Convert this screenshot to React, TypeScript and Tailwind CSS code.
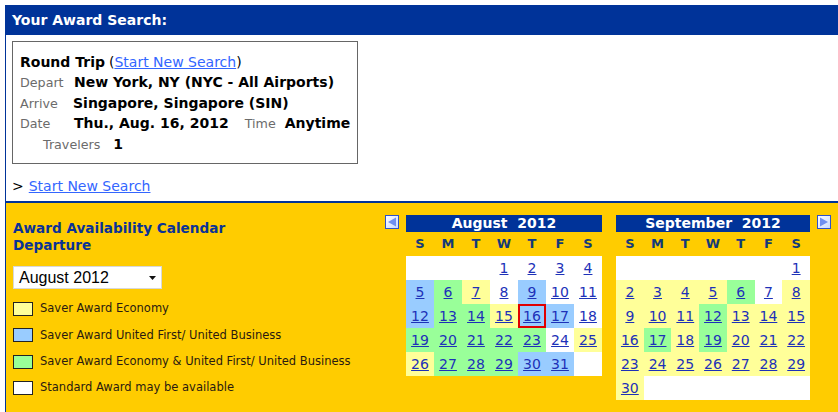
import React from "react";

const COLORS: Record<string, string> = {
  y: "bg-[#FFFF99]",
  b: "bg-[#99CCFF]",
  g: "bg-[#99FF99]",
  w: "bg-white",
};

type Cell = { d: number | null; c: string; sel?: boolean };

const aug: Cell[][] = [
  [
    { d: null, c: "w" },
    { d: null, c: "w" },
    { d: null, c: "w" },
    { d: 1, c: "w" },
    { d: 2, c: "w" },
    { d: 3, c: "w" },
    { d: 4, c: "w" },
  ],
  [
    { d: 5, c: "b" },
    { d: 6, c: "g" },
    { d: 7, c: "y" },
    { d: 8, c: "w" },
    { d: 9, c: "b" },
    { d: 10, c: "w" },
    { d: 11, c: "w" },
  ],
  [
    { d: 12, c: "b" },
    { d: 13, c: "g" },
    { d: 14, c: "g" },
    { d: 15, c: "y" },
    { d: 16, c: "b", sel: true },
    { d: 17, c: "b" },
    { d: 18, c: "w" },
  ],
  [
    { d: 19, c: "g" },
    { d: 20, c: "g" },
    { d: 21, c: "g" },
    { d: 22, c: "g" },
    { d: 23, c: "g" },
    { d: 24, c: "w" },
    { d: 25, c: "y" },
  ],
  [
    { d: 26, c: "y" },
    { d: 27, c: "g" },
    { d: 28, c: "g" },
    { d: 29, c: "g" },
    { d: 30, c: "b" },
    { d: 31, c: "b" },
    { d: null, c: "w" },
  ],
];

const sepColors: Record<number, string> = { 1: "w", 6: "g", 7: "w", 12: "g", 17: "g", 19: "g" };
const sep: Cell[][] = (() => {
  const cells: Cell[] = [];
  for (let i = 0; i < 6; i++) cells.push({ d: null, c: "w" });
  for (let d = 1; d <= 30; d++) cells.push({ d, c: sepColors[d] ?? "y" });
  while (cells.length < 42) cells.push({ d: null, c: "w" });
  const rows: Cell[][] = [];
  for (let r = 0; r < 6; r++) rows.push(cells.slice(r * 7, r * 7 + 7));
  return rows;
})();

function Arrow({ dir }: { dir: "left" | "right" }) {
  const id = "g" + dir;
  return (
    <svg width="14" height="14" viewBox="0 0 14 14" className="block">
      <defs>
        <linearGradient id={id} x1="0" y1="0" x2="1" y2="1">
          <stop offset="0" stopColor="#ffffff" />
          <stop offset="1" stopColor="#c8d8ff" />
        </linearGradient>
      </defs>
      <rect x="0.5" y="0.5" width="13" height="13" fill={`url(#${id})`} stroke="#2f52c8" />
      {dir === "left" ? (
        <polygon points="11,2.5 11,11.5 3,7" fill="#6f8ff0" />
      ) : (
        <polygon points="3,2.5 3,11.5 11,7" fill="#6f8ff0" />
      )}
    </svg>
  );
}

function Calendar({ title, rows, width }: { title: string; rows: Cell[][]; width: string }) {
  return (
    <div className={width}>
      <div className="h-[17px] bg-[#003399] text-white font-bold text-[14px] leading-[17px] text-center whitespace-pre">
        {title}
      </div>
      <div className="grid grid-cols-7 h-[24px] items-center text-center text-[13px] font-bold text-[#123a7a]">
        {["S", "M", "T", "W", "T", "F", "S"].map((l, i) => (
          <div key={i}>{l}</div>
        ))}
      </div>
      <div>
        {rows.map((r, ri) => (
          <div key={ri} className="grid grid-cols-7">
            {r.map((c, ci) => (
              <div
                key={ci}
                className={`h-[24px] flex items-center justify-center text-[14px] ${COLORS[c.c]} ${
                  c.sel ? "border-2 border-[#e00000]" : ""
                }`}
              >
                {c.d !== null && <span className="underline text-[#1d31b8] leading-none">{c.d}</span>}
              </div>
            ))}
          </div>
        ))}
      </div>
    </div>
  );
}

function Legend({ color, label }: { color: string; label: string }) {
  return (
    <div className="flex items-center h-[14px] mb-[12.3px]">
      <div className={`w-[20px] h-[14px] border border-[#222] ${color}`} />
      <span className="ml-[7px] text-[11.5px] text-[#2a1a10]">{label}</span>
    </div>
  );
}

export default function App() {
  return (
    <div className="font-['DejaVu_Sans',Verdana,sans-serif] bg-white w-[838px] h-[412px] overflow-hidden pt-[5px]">
      <div className="ml-[5px] border-l border-[#003399]">
        <div className="h-[30px] bg-[#003399] text-white font-bold text-[14px] pl-[6px] flex items-center">
          Your Award Search:
        </div>
        <div className="h-[166px] bg-white pl-[6px] pt-[6px]">
          <div className="w-[346px] h-[123px] border border-[#666] pl-[7px] pt-[10px] text-black">
            <div className="h-[20.5px] flex items-center text-[14px]">
              <span className="font-bold">Round Trip</span>
              <span className="ml-[4px]">
                (<a className="underline text-[#3366ff]">Start New Search</a>)
              </span>
            </div>
            <div className="h-[20.5px] flex items-center">
              <span className="w-[54px] text-[12.7px] text-[#6b6b6b]">Depart</span>
              <span className="font-bold text-[14px]">New York, NY (NYC - All Airports)</span>
            </div>
            <div className="h-[20.5px] flex items-center">
              <span className="w-[53px] text-[12.7px] text-[#6b6b6b]">Arrive</span>
              <span className="font-bold text-[14px]">Singapore, Singapore (SIN)</span>
            </div>
            <div className="h-[20.5px] flex items-center">
              <span className="w-[54px] text-[12.7px] text-[#6b6b6b]">Date</span>
              <span className="font-bold text-[14px]">Thu., Aug. 16, 2012</span>
              <span className="ml-[16px] text-[12.7px] text-[#6b6b6b]">Time</span>
              <span className="ml-[9px] font-bold text-[14px]">Anytime</span>
            </div>
            <div className="h-[20.5px] flex items-center pl-[23px]">
              <span className="text-[12.7px] text-[#6b6b6b]">Travelers</span>
              <span className="ml-[13px] font-bold text-[14px]">1</span>
            </div>
          </div>
          <div className="mt-[12px] text-[14px] text-black flex items-center h-[20px]">
            <span>&gt;</span>
            <a className="ml-[5px] underline text-[#3366ff]">Start New Search</a>
          </div>
        </div>
        <div className="h-[2px] bg-[#003399]" />
        <div className="h-[209px] bg-[#FFCC00] flex">
          <div className="w-[379px] pl-[7px] pt-[17px]">
            <div className="text-[13.6px] font-bold text-[#0a3296] leading-[17px]">
              Award Availability Calendar
              <br />
              Departure
            </div>
            <div className="mt-[12px] w-[149px] h-[23px] bg-white border border-[#d8d8d8] flex items-center pl-[5px] pr-[4px] font-['Liberation_Sans',Arial,sans-serif] text-[16px] text-black">
              <span className="flex-1">August 2012</span>
              <svg width="7" height="4" viewBox="0 0 7 4" className="mr-[1px]">
                <polygon points="0,0 7,0 3.5,4" fill="#111" />
              </svg>
            </div>
            <div className="mt-[13px]">
              <Legend color="bg-[#FFFF99]" label="Saver Award Economy" />
              <Legend color="bg-[#99CCFF]" label="Saver Award United First/ United Business" />
              <Legend color="bg-[#99FF99]" label="Saver Award Economy & United First/ United Business" />
              <Legend color="bg-white" label="Standard Award may be available" />
            </div>
          </div>
          <div className="pt-[12px] flex items-start">
            <Arrow dir="left" />
            <div className="ml-[7px]">
              <Calendar title={"August  2012"} rows={aug} width="w-[196px]" />
            </div>
            <div className="ml-[14px]">
              <Calendar title={"September  2012"} rows={sep} width="w-[194px]" />
            </div>
            <div className="ml-[7px]">
              <Arrow dir="right" />
            </div>
          </div>
        </div>
      </div>
    </div>
  );
}
